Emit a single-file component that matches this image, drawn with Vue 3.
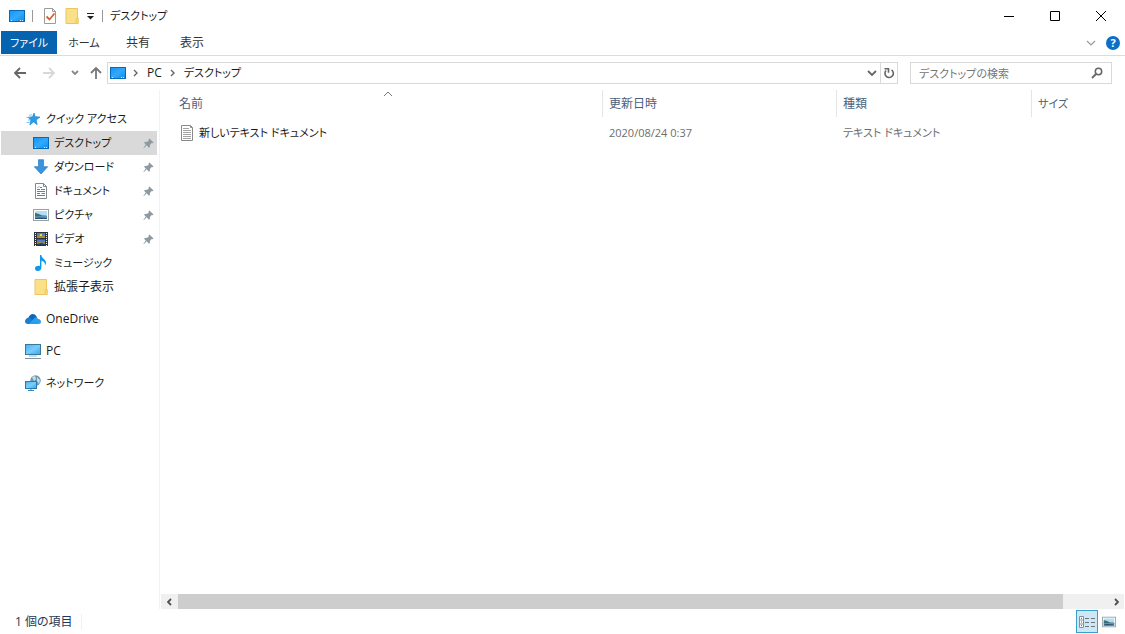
<template>
  <div class="explorer">
    <!-- ===== ICON SHEET ===== -->
    <svg class="icon-sheet" aria-hidden="true">
      <defs>
        <linearGradient id="blue" x1="0" y1="0" x2="1" y2="1">
          <stop offset="0" stop-color="#1593f5" />
          <stop offset="0.5" stop-color="#32a9fb" />
          <stop offset="1" stop-color="#0c8df0" />
        </linearGradient>
        <linearGradient id="screen" x1="0" y1="0" x2="1" y2="1">
          <stop offset="0" stop-color="#44b4f8" />
          <stop offset="0.5" stop-color="#7accfd" />
          <stop offset="1" stop-color="#35a5f0" />
        </linearGradient>
      </defs>
      <symbol id="desktop" viewBox="0 0 16 16">
        <rect x="0.5" y="2.5" width="15" height="11" fill="url(#blue)" stroke="#0869b5" />
        <path d="M2 12.500h1M11 12.500h1M13 12.500h1" stroke="#d8f0ff" />
      </symbol>
      <symbol id="star" viewBox="0 0 16 16">
        <path d="M9 2l1.200 3.700 4.800.3-3.800 3 1 4.700L8.500 11 4.800 14l1-4.800L3 6.200l4.500-.4z" fill="#279de9" stroke="#1682ce" stroke-width=".6" />
        <path d="M4 4h3M1.500 6.500h4M3 9h3M1.500 11.500h3" stroke="#60b9ed" stroke-width=".8" />
      </symbol>
      <symbol id="download" viewBox="0 0 16 16">
        <path d="M5.500.7h5v7h4.200L8 15 1.300 7.700h4.200z" fill="#3993df" stroke="#2b7ac0" stroke-width=".7" />
      </symbol>
      <symbol id="document" viewBox="0 0 16 16">
        <path d="M2.500.5h8l3 3v12h-11z" fill="#fff" stroke="#818a90" />
        <path d="M10.500.5v3h3" fill="none" stroke="#818a90" />
        <path d="M7 4.500h2M4 6.500h3M8 6.500h4M4 8.500h8M4 10.500h3M8.500 10.500H12M4 12.500h8" stroke="#3a8bc8" />
        <path d="M4.500 5l2-2" stroke="#63a8d6" />
      </symbol>
      <symbol id="picture" viewBox="0 0 16 16">
        <rect x=".5" y="2.5" width="15" height="11" fill="#fff" stroke="#96a0a5" />
        <path d="M2 4h12v8H2z" fill="#b5ddf4" />
        <path d="M2 6c2 0 4 1 6 2s4 0 6 1v1H2z" fill="#3d6f78" />
        <path d="M2 9.500c4-.5 8-.5 12-.5v3H2z" fill="#5d94b5" />
        <path d="M2 11c4-1 8-.5 12 0v1H2z" fill="#27516f" />
      </symbol>
      <symbol id="video" viewBox="0 0 16 16">
        <path d="M1 1h14v14H1z" fill="#30343b" />
        <path d="M2.500 2v13M13.500 2v13" stroke="#f2f2f2" stroke-width="1" stroke-dasharray="1 1" />
        <path d="M4 2h8v5H4zM4 8.500h8V14H4z" fill="#487fd1" />
        <path d="M4 5l3-2 2 2 3-1v3H4zM4 12l3-2 2 2 3-2v4H4z" fill="#a98b33" />
        <path d="M7 3h2v2H7z" fill="#f2d84c" />
        <path d="M4 13l4-1 4 1v1H4z" fill="#273c62" />
      </symbol>
      <symbol id="music" viewBox="0 0 16 16">
        <path d="M7 0h1.300c.2 3.500 5 4.200 4.700 8-.1 1-.4 1.700-1 2.500.3-3-1.600-4.400-3.600-4.700v6.600C8.400 14.600 6.800 16 4.800 16S2 15 2 13.500C2 11.500 4 10.500 7 11z" fill="#0c98ed" />
      </symbol>
      <symbol id="folder" viewBox="0 0 16 16">
        <path d="M2 .5h11.500v15H2z" fill="#fbe08a" stroke="#ebc65f" />
        <path d="M12 15.500v-5h2.500v5z" fill="#f3d473" stroke="#ebc65f" stroke-width=".6" />
      </symbol>
      <symbol id="cloud" viewBox="0 0 16 16">
        <path d="M3.500 7.500C4 2.500 10 1 12 6.500L8 10z" fill="#0d67ba" />
        <path d="M0 10.500C0 8 2.500 6 4.500 6.500l7.500 6.500H3c-2 0-3-1-3-2.500z" fill="#147fd4" />
        <path d="M8 8.500c1.500-3 4.500-2.500 5.200-.5C15 8 16 9.500 16 10.700c0 1.300-1 2.300-2.500 2.300H4z" fill="#2b9ded" />
      </symbol>
      <symbol id="pc" viewBox="0 0 16 16">
        <rect x=".5" y="1.5" width="15" height="10" fill="url(#screen)" stroke="#397896" />
        <path d="M4 13h8" stroke="#83bfdd" />
        <path d="M0 15.500h16" stroke="#7d929e" />
      </symbol>
      <symbol id="network" viewBox="0 0 16 16">
        <circle cx="10.500" cy="5.500" r="5.200" fill="#7296aa" />
        <path d="M7 2l3-1 1 3-2 2zM12 2l3 3-1 4-2-3z" fill="#c0e0ed" />
        <rect x=".5" y="6.500" width="11" height="7" fill="url(#screen)" stroke="#287da9" />
        <path d="M3 15.500h6M6 14v1" stroke="#348bb9" />
      </symbol>
      <symbol id="pin" viewBox="0 0 12 12">
        <path d="M7 .5L11.500 5l-1.200.7-.8-.2-2 2 .1 2-1 1L4 8 .8 11.200l-.3-.5L3 7 1.200 5.200l1-1 2.200.2 2-2-.2-1z" fill="#8d9aa2" />
      </symbol>
      <symbol id="properties" viewBox="0 0 16 16">
        <path d="M2.500.5h8l3 3v12h-11z" fill="#fff" stroke="#9a9a9a" />
        <path d="M10.500.5v3h3" fill="none" stroke="#9a9a9a" />
        <path d="M4.500 8.500l3 3 5-6" fill="none" stroke="#dc5f2b" stroke-width="1.800" />
      </symbol>
      <symbol id="text" viewBox="0 0 16 16">
        <path d="M2.500.5h9l2 2v13h-11z" fill="#fff" stroke="#8a8a8a" />
        <path d="M11.500.5v2h2" fill="none" stroke="#8a8a8a" />
        <path d="M4 3.500h6M4 5.500h8M4 7.500h8M4 9.500h8M4 11.500h8M4 13.500h8" stroke="#a3a3a3" />
      </symbol>
    </svg>

    <!-- ===== TITLE BAR ===== -->
    <header class="title-bar">
      <div class="quick-tools">
        <svg class="icon"><use href="#desktop" /></svg>
        <span class="tool-sep"></span>
        <button class="plain" aria-label="プロパティ"><svg class="icon"><use href="#properties" /></svg></button>
        <button class="plain" aria-label="新しいフォルダー"><svg class="icon"><use href="#folder" /></svg></button>
        <button class="plain" aria-label="カスタマイズ">
          <svg class="customize" viewBox="0 0 9 8"><path d="M1 1.500h7" stroke="#222" /><path d="M1 4h7L4.500 7.500z" fill="#222" /></svg>
        </button>
        <span class="tool-sep"></span>
      </div>
      <h1 class="title kana">デスクトップ</h1>
      <div class="window-controls">
        <button class="plain" aria-label="最小化"><svg viewBox="0 0 12 12"><path d="M1 6.500h10" /></svg></button>
        <button class="plain" aria-label="最大化"><svg viewBox="0 0 12 12"><path d="M1.500 1.500h9v9h-9z" /></svg></button>
        <button class="plain" aria-label="閉じる"><svg viewBox="0 0 12 12"><path d="M1 1l10 10M11 1L1 11" /></svg></button>
      </div>
    </header>

    <!-- ===== RIBBON TABS ===== -->
    <nav class="ribbon">
      <button class="plain file-tab kana">ファイル</button>
      <button v-for="tab in tabs" :key="tab" class="plain tab" :class="{ kana: isKana(tab) }">{{ tab }}</button>
      <button class="plain expand" aria-label="リボンの展開">
        <svg viewBox="0 0 10 6"><path d="M1 1l4 4 4-4" fill="none" stroke="#999" stroke-width="1.200" /></svg>
      </button>
      <button class="plain help" aria-label="ヘルプ">?</button>
    </nav>

    <!-- ===== ADDRESS ROW ===== -->
    <div class="address-row">
      <div class="history">
        <button class="plain" aria-label="戻る"><svg class="arrow" viewBox="0 0 14 14"><path d="M13 7H2M7 2L2 7l5 5" stroke="#666" /></svg></button>
        <button class="plain" aria-label="進む" disabled><svg class="arrow" viewBox="0 0 14 14"><path d="M1 7h11M7 2l5 5-5 5" stroke="#d8d8d8" /></svg></button>
        <button class="plain" aria-label="最近表示した場所"><svg class="recent" viewBox="0 0 8 6"><path d="M1 1l3 3 3-3" stroke="#888" /></svg></button>
        <button class="plain" aria-label="上へ"><svg class="arrow" viewBox="0 0 14 14"><path d="M7 13V2M2 7l5-5 5 5" stroke="#777" /></svg></button>
      </div>
      <div class="address">
        <svg class="icon"><use href="#desktop" /></svg>
        <svg class="chevron" viewBox="0 0 6 8"><path d="M1 1l3 3-3 3" /></svg>
        <a href="#pc">PC</a>
        <svg class="chevron" viewBox="0 0 6 8"><path d="M1 1l3 3-3 3" /></svg>
        <a class="kana" href="#desktop">デスクトップ</a>
        <button class="plain drop" aria-label="以前の場所"><svg viewBox="0 0 10 8"><path d="M1 2l4 4 4-4" fill="none" stroke="#666" stroke-width="1.800" /></svg></button>
        <button class="plain refresh" aria-label="更新">
          <svg viewBox="0 0 12 12"><path d="M8.500 2.800A4.200 4.200 0 1 1 3 3.500M1.500 1.800h4v4" fill="none" stroke="#666" stroke-width="1.600" /></svg>
        </button>
      </div>
      <form class="search" @submit.prevent>
        <input v-model="query" class="kana" type="search" placeholder="デスクトップの検索" aria-label="デスクトップの検索" />
        <button class="plain" aria-label="検索">
          <svg viewBox="0 0 12 12"><circle cx="7.500" cy="4.500" r="3.200" fill="none" stroke="#666" stroke-width="1.500" /><path d="M5 7L1 11" stroke="#666" stroke-width="1.800" /></svg>
        </button>
      </form>
    </div>

    <div class="body">
      <!-- ===== NAVIGATION PANE ===== -->
      <nav class="sidebar">
        <ul v-for="group in groups" :key="group.name">
          <li>
            <a class="place" :class="{ kana: isKana(group.name) }" href="#"><svg class="icon"><use :href="'#' + group.icon" /></svg>{{ group.name }}</a>
          </li>
          <li v-for="item in group.items" :key="item.name">
            <a
              class="place child"
              :class="{ selected: item.name === current, kana: isKana(item.name) }"
              href="#"
              @click.prevent="current = item.name"
            >
              <svg class="icon"><use :href="'#' + item.icon" /></svg>{{ item.name }}
              <svg v-if="item.pinned" class="pin"><use href="#pin" /></svg>
            </a>
          </li>
        </ul>
      </nav>

      <!-- ===== FILE LIST ===== -->
      <main class="content">
        <div class="list">
          <table>
            <colgroup><col /><col class="col-date" /><col class="col-type" /><col class="col-size" /></colgroup>
            <thead>
              <tr>
                <th>
                  名前
                  <svg class="sort" viewBox="0 0 10 6"><path d="M1 5l4-4 4 4" fill="none" stroke="#777" /></svg>
                </th>
                <th>更新日時</th>
                <th>種類</th>
                <th class="kana">サイズ</th>
              </tr>
            </thead>
            <tbody>
              <tr v-for="file in files" :key="file.name">
                <td class="name"><div class="file"><svg class="icon"><use href="#text" /></svg>{{ file.name }}</div></td>
                <td>{{ file.date }}</td>
                <td>{{ file.type }}</td>
                <td></td>
              </tr>
            </tbody>
          </table>
        </div>
        <div class="scrollbar">
          <button class="plain" aria-label="左へ"><svg viewBox="0 0 6 8"><path d="M4 1L1 4l3 3" /></svg></button>
          <div class="track"><div class="thumb"></div></div>
          <button class="plain" aria-label="右へ"><svg viewBox="0 0 6 8"><path d="M2 1l3 3-3 3" /></svg></button>
        </div>
      </main>
    </div>

    <!-- ===== STATUS BAR ===== -->
    <footer class="status">
      <span class="count">{{ files.length }} 個の項目</span>
      <div class="views">
        <button class="plain view active" aria-label="詳細表示">
          <svg viewBox="0 0 18 14">
            <path d="M1.500 1.500h4v11h-4zM1.500 5h4M1.500 9h4" fill="#fff" stroke="#8b8f92" />
            <path d="M3 3.300h1M3 7h1M3 10.700h1" stroke="#a33" />
            <path d="M7 3.500h4M13 3.500h4M7 7.500h4M13 7.500h4M7 11.500h4M13 11.500h4" stroke="#6f767a" />
          </svg>
        </button>
        <button class="plain view" aria-label="大きい縮小版"><svg viewBox="0 0 16 16"><use href="#picture" /></svg></button>
      </div>
    </footer>
  </div>
</template>

<script setup>
import { ref } from 'vue'

const tabs = ['ホーム', '共有', '表示']
const query = ref('')
const current = ref('デスクトップ')

const groups = [
  {
    name: 'クイック アクセス',
    icon: 'star',
    items: [
      { name: 'デスクトップ', icon: 'desktop', pinned: true },
      { name: 'ダウンロード', icon: 'download', pinned: true },
      { name: 'ドキュメント', icon: 'document', pinned: true },
      { name: 'ピクチャ', icon: 'picture', pinned: true },
      { name: 'ビデオ', icon: 'video', pinned: true },
      { name: 'ミュージック', icon: 'music' },
      { name: '拡張子表示', icon: 'folder' },
    ],
  },
  { name: 'OneDrive', icon: 'cloud', items: [] },
  { name: 'PC', icon: 'pc', items: [] },
  { name: 'ネットワーク', icon: 'network', items: [] },
]

const files = [
  { name: '新しいテキスト ドキュメント', date: '2020/08/24 0:37', type: 'テキスト ドキュメント' },
]

// katakana labels are set one size smaller than kanji and latin ones
const isKana = (text) => /^[ァ-ー ]+$/.test(text)
</script>

<style>
body {
  background: #fff;
}
</style>

<style scoped>
.explorer {
  display: flex;
  flex-direction: column;
  min-height: 100vh;
  font-family: 'Open Sans', 'Noto Sans CJK JP', sans-serif;
  font-size: 12px;
  line-height: 16px;
  font-feature-settings: 'palt';
  color: #1a1a1a;
  background: #fff;
}
.icon-sheet {
  position: absolute;
  width: 0;
  height: 0;
}
.icon {
  flex: none;
  width: 16px;
  height: 16px;
}
.plain {
  display: flex;
  align-items: center;
  justify-content: center;
  margin: 0;
  padding: 0;
  border: 0;
  background: none;
  font: inherit;
  font-feature-settings: inherit;
  color: inherit;
}
a {
  color: inherit;
  text-decoration: none;
}

/* ===== TITLE BAR ===== */
.title-bar {
  display: flex;
  align-items: center;
  height: 31px;
  padding: 0 1px 0 9px;
}
.quick-tools {
  display: flex;
  align-items: center;
  gap: 6px;
}
.tool-sep {
  width: 1px;
  height: 12px;
  margin: 0 1px;
  background: #999;
}
.tool-sep + .plain {
  margin-left: 2px;
}
.customize {
  width: 9px;
  height: 8px;
}
.title {
  margin: 0 0 0 6px;
  font-weight: 400;
}
.window-controls {
  display: flex;
  margin-left: auto;
}
.window-controls .plain {
  width: 46px;
  height: 30px;
}
.window-controls svg {
  width: 12px;
  height: 12px;
  fill: none;
  stroke: #000;
}

/* ===== RIBBON ===== */
.ribbon {
  display: flex;
  align-items: center;
  height: 24px;
  padding: 0 5px 0 1px;
  border-bottom: 1px solid #dadbdc;
}
.file-tab {
  align-self: flex-start;
  width: 56px;
  height: 23px;
  color: #fff;
  background: #0563af;
}
.tab {
  width: 54px;
  height: 23px;
  color: #333;
}
.expand {
  margin-left: auto;
}
.expand svg {
  width: 10px;
  height: 6px;
}
.help {
  width: 14px;
  height: 14px;
  margin-left: 10px;
  border-radius: 50%;
  color: #fff;
  font-size: 11px;
  font-weight: 700;
  background: #0b6fc8;
}

/* ===== ADDRESS ===== */
.address-row {
  display: flex;
  align-items: center;
  height: 34px;
  padding: 0 13px;
}
.history {
  display: flex;
  align-items: center;
  width: 94px;
}
.history .plain {
  margin-right: 15px;
}
.history .plain:nth-child(3) {
  margin-right: 10px;
}
.history .plain:last-child {
  margin-right: 0;
}
.arrow {
  width: 14px;
  height: 14px;
}
.recent {
  width: 8px;
  height: 6px;
}
.history path {
  fill: none;
  stroke-width: 1.8;
}
.address {
  display: flex;
  flex: 1;
  align-items: center;
  height: 20px;
  padding-left: 2px;
  border: 1px solid #d9d9d9;
}
.address a {
  margin-right: 8px;
}
.chevron {
  width: 6px;
  height: 8px;
  margin: 0 8px 0 7px;
}
a + .chevron {
  margin-left: 0;
}
.chevron path {
  fill: none;
  stroke: #666;
  stroke-width: 1.4;
}
.drop {
  width: 16px;
  height: 20px;
  margin-left: auto;
}
.drop svg {
  width: 10px;
  height: 8px;
}
.refresh {
  width: 17px;
  height: 20px;
  border-left: 1px solid #d9d9d9;
}
.refresh svg {
  width: 12px;
  height: 12px;
}
.search {
  display: flex;
  flex: 0 0 192px;
  align-items: center;
  height: 20px;
  margin-left: 12px;
  padding-right: 8px;
  border: 1px solid #d9d9d9;
}
.search input {
  flex: 1;
  min-width: 0;
  height: 18px;
  padding: 0 0 0 8px;
  border: 0;
  outline: 0;
  font: inherit;
  font-feature-settings: inherit;
  background: none;
}
.search input::placeholder {
  color: #767676;
}
.search svg {
  width: 12px;
  height: 12px;
}

/* ===== SIDEBAR ===== */
.body {
  display: flex;
  flex: 1;
}
.sidebar {
  flex: none;
  width: 158px;
  padding: 17px 0 0 1px;
  border-right: 1px solid #f2f2f2;
}
.sidebar ul {
  margin: 0 0 8px;
  padding: 0;
  list-style: none;
}
.place {
  display: flex;
  align-items: center;
  gap: 5px;
  height: 24px;
  margin-right: 2px;
  padding: 0 3px 0 24px;
}
.child {
  padding-left: 32px;
}
.selected {
  background: #d9d9d9;
}
.pin {
  width: 11px;
  height: 11px;
  margin-left: auto;
}

/* ===== FILE LIST ===== */
.content {
  display: flex;
  flex: 1;
  flex-direction: column;
  min-width: 0;
  padding: 0 1px;
}
.list {
  flex: 1;
  padding-left: 11px;
}
table {
  width: 100%;
  table-layout: fixed;
  border-collapse: separate;
  border-spacing: 0;
}
.col-date {
  width: 234px;
}
.col-type {
  width: 195px;
}
.col-size {
  width: 93px;
}
th {
  position: relative;
  height: 27px;
  padding: 0 0 0 6px;
  border-left: 1px solid #e5e5e5;
  font-weight: 400;
  text-align: left;
  color: #4c607a;
}
th:first-child {
  border-left-color: transparent;
}
.sort {
  position: absolute;
  top: 1px;
  left: 50%;
  width: 10px;
  height: 6px;
  transform: translateX(-50%);
}
td {
  height: 22px;
  padding: 5px 0 0 7px;
  font-size: 11px;
  color: #6d6d6d;
}
.name {
  color: #1a1a1a;
}
.file {
  display: flex;
  align-items: center;
  gap: 4px;
}
.scrollbar {
  display: flex;
  height: 15px;
  background: #f0f0f0;
}
.scrollbar .plain {
  width: 17px;
}
.scrollbar svg {
  width: 6px;
  height: 8px;
}
.scrollbar path {
  fill: none;
  stroke: #505050;
  stroke-width: 1.8;
}
.track {
  flex: 1;
  padding-right: 44px;
}
.thumb {
  height: 15px;
  background: #cdcdcd;
}

/* ===== STATUS BAR ===== */
.status {
  display: flex;
  align-items: center;
  height: 25px;
  padding: 0 5px 0 15px;
  color: #1e395b;
}
.count {
  padding-right: 8px;
  border-right: 1px solid #f0f0f0;
}
.views {
  display: flex;
  margin-left: auto;
}
.view {
  width: 22px;
  height: 23px;
  border: 1px solid transparent;
}
.view svg {
  flex: none;
  width: 14px;
  height: 14px;
}
.active {
  border-color: #3ba0c9;
  background: #cce8f6;
}
.active svg {
  width: 18px;
}

.kana,
.search .kana {
  font-size: 11px;
}
</style>
